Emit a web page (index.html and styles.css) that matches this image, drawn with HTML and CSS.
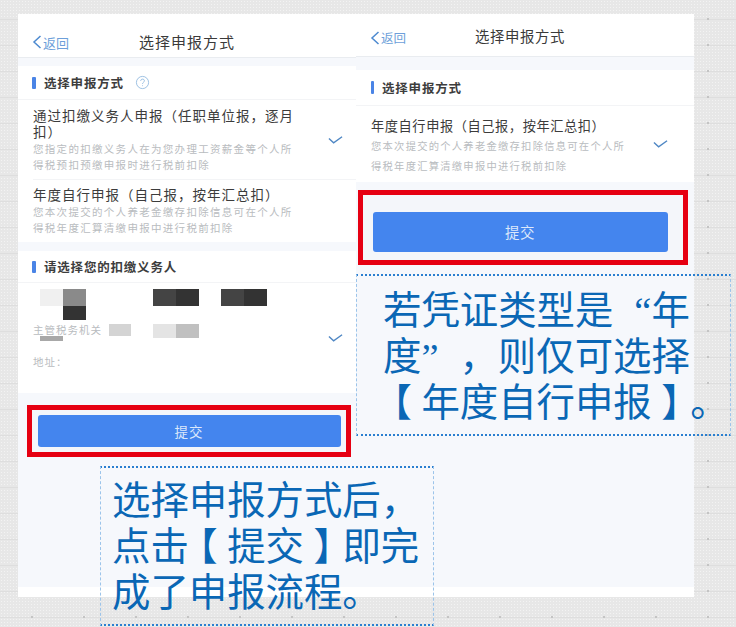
FILE: index.html
```html
<!DOCTYPE html>
<html lang="zh">
<head>
<meta charset="utf-8">
<title>选择申报方式</title>
<link rel="stylesheet" href="styles.css">
</head>
<body>
<div class="stage">
  <main class="sheet">
    <section class="phone phone-left">
      <header class="bar"><span class="back"><svg class="chev" viewBox="0 0 10 14"><path d="M8.500 1 2 7l6.500 6"/></svg>返回</span><h1>选择申报方式</h1></header>
      <div class="card card-a">
        <h2 class="sec"><i></i>选择申报方式<svg class="help" viewBox="0 0 16 16"><circle cx="8" cy="8" r="6.500"/><path d="M6 6.300c.2-2.700 4.200-2.500 4 0 0 1.500-2 1.500-2 3.200"/><path d="M8 11v.9"/></svg></h2>
        <div class="row">
          <div class="opt"><p class="t">通过扣缴义务人申报（任职单位报，逐月扣）</p><p class="d">您指定的扣缴义务人在为您办理工资薪金等个人所得税预扣预缴申报时进行税前扣除</p></div>
          <svg class="check" viewBox="0 0 16 10"><path d="M1 3.500 6 8 15 1.500"/></svg>
        </div>
        <div class="row row-plain">
          <div class="opt"><p class="t">年度自行申报（自己报，按年汇总扣）</p><p class="d">您本次提交的个人养老金缴存扣除信息可在个人所得税年度汇算清缴申报中进行税前扣除</p></div>
        </div>
      </div>
      <div class="card card-b">
        <h2 class="sec"><i></i>请选择您的扣缴义务人</h2>
        <div class="agent">
          <span class="b b1"></span><span class="b b2"></span><span class="b b3"></span><span class="b b4"></span><span class="b b5"></span><span class="b b6"></span><span class="b b7"></span><span class="b b8"></span>
          <p class="lab lab1">主管税务机关</p>
          <p class="lab lab2">地址：</p>
          <svg class="check check-b" viewBox="0 0 16 10"><path d="M1 3.500 6 8 15 1.500"/></svg>
        </div>
      </div>
      <div class="foot"><div class="red"><button class="btn">提交</button></div></div>
    </section>
    <section class="phone phone-right">
      <header class="bar"><span class="back"><svg class="chev" viewBox="0 0 10 14"><path d="M8.500 1 2 7l6.500 6"/></svg>返回</span><h1>选择申报方式</h1></header>
      <div class="card card-c">
        <h2 class="sec"><i></i>选择申报方式</h2>
        <div class="row">
          <div class="opt"><p class="t">年度自行申报（自己报，按年汇总扣）</p><p class="d">您本次提交的个人养老金缴存扣除信息可在个人所得税年度汇算清缴申报中进行税前扣除</p></div>
          <svg class="check" viewBox="0 0 16 10"><path d="M1 3.500 6 8 15 1.500"/></svg>
        </div>
      </div>
      <div class="foot"><div class="red"><button class="btn">提交</button></div></div>
    </section>
  </main>
  <aside class="note note-right"><p>若凭证类型是<span class="lq">“</span>年</p><p>度<span class="rq">”</span>，则仅可选择</p><p><span class="br">【</span>年度自行申报<span class="br">】</span>。</p></aside>
  <aside class="note note-left"><p>选择申报方式后，</p><p>点击<span class="br">【</span>提交<span class="br">】</span>即完</p><p>成了申报流程。</p></aside>
</div>
</body>
</html>
```
FILE: styles.css
```css
* { box-sizing: border-box; margin: 0; padding: 0; }
html, body { width: 736px; height: 627px; overflow: hidden; }
body {
  font-family: "Noto Sans CJK SC", "Noto Sans", sans-serif;
  background-color: #e7e7e7;
  background-image:
    radial-gradient(circle, #c4c4c4 0 1px, transparent 1.300px),
    repeating-linear-gradient(180deg, transparent 0 25px, #dedede 25px 26px),
    radial-gradient(circle, #f3f3f3 0 .7px, transparent 1px);
  background-size: 52px 26px, 100% 26px, 3px 3px;
  background-position: 6px 6px, 0 -6px, 0 0;
}
.stage { position: relative; width: 736px; height: 627px; padding: 14px 42px 30px 18px; }
.sheet { display: flex; height: 583px; background: #f6f8fc; border-bottom: 10px solid #fff; }
.phone { width: 338px; display: flex; flex-direction: column; }
.bar {
  background: #fff; position: relative;
  display: flex; align-items: center; justify-content: center;
  border-bottom: 1px solid #e9ecf0;
}
.bar h1 { font-weight: 400; color: #3a3a3a; line-height: 1; }
.back {
  position: absolute; display: flex; align-items: center; gap: 1px;
  color: #6d9fda; line-height: 1; transform: translateY(-50%);
}
.chev { width: 10px; height: 14px; fill: none; stroke: #4d8ad0; stroke-width: 1.500; }
.phone-left .bar { height: 44px; padding-top: 12px; }
.phone-left .bar h1 { font-size: 15px; letter-spacing: 1px; }
.phone-left .back { left: 14px; top: 28px; font-size: 13px; }
.phone-right .bar { height: 43px; padding: 2px 10px 0 0; }
.phone-right .bar h1 { font-size: 14.400px; letter-spacing: .6px; }
.phone-right .back { left: 14px; top: 24px; font-size: 12.500px; }
.card { background: #fff; }
.card-a { margin-top: 8px; }
.sec {
  display: flex; align-items: center; font-size: 12.500px; font-weight: 700; color: #3d3d3d;
  padding-left: 14px; height: 34px; letter-spacing: .8px; border-bottom: 1px solid #f3f4f6;
}
.sec i { width: 4px; height: 12px; margin-right: 8px; border-radius: 1px; background: #4a84e6; }
.help { width: 15px; height: 15px; margin-left: 11px; fill: none; stroke: #8db7de; stroke-width: .9; }
.row { display: flex; align-items: center; margin-left: 15px; padding-right: 13px; border-bottom: 1px solid #f3f4f6; }
.row-plain { border-bottom: 0; }
.opt { width: 265px; padding: 9px 0 6px; flex: none; font-family: "Liberation Sans", "Noto Sans CJK SC", sans-serif; }
.row-plain .opt { padding-top: 8px; }
.t { font-size: 13.500px; line-height: 16px; color: #3c3c3c; letter-spacing: 1px; }
.d { font-size: 10.500px; line-height: 16px; color: #b9bcc0; letter-spacing: 1.300px; }
.check { width: 15px; height: 10px; margin-left: auto; fill: none; stroke: #4f87c4; stroke-width: 1.500; }
.card-b { margin-top: 9px; }
.card-b .sec { height: 32px; }
.agent { position: relative; height: 110px; }
.b { position: absolute; }
.b1 { left: 22px; top: 6px; width: 23px; height: 17px; background: #f0f0f0; }
.b2 { left: 45px; top: 6px; width: 23px; height: 17px; background: #8a8a8a; }
.b3 { left: 45px; top: 23px; width: 23px; height: 14px; background: #333; }
.b4 { left: 135px; top: 6px; width: 46px; height: 17px; background: linear-gradient(90deg, #444 50%, #333 50%); }
.b5 { left: 203px; top: 6px; width: 46px; height: 17px; background: linear-gradient(90deg, #444 50%, #333 50%); }
.b6 { left: 91px; top: 41px; width: 22px; height: 12px; background: #d4d4d4; }
.b7 { left: 135px; top: 41px; width: 46px; height: 14px; background: linear-gradient(90deg, #e4e4e4 50%, #c0c0c0 50%); }
.b8 { left: 22px; top: 53px; width: 23px; height: 5px; background: #a8a8a8; }
.lab { position: absolute; left: 15px; font-size: 10.500px; line-height: 12px; color: #b9bcc0; letter-spacing: 1px; }
.lab1 { top: 41px; }
.lab2 { top: 73px; }
.check-b { position: absolute; right: 13px; top: 50px; }
.foot { display: flex; }
.phone-left .foot { padding: 12px 0 0 9px; }
.phone-right .foot { padding: 8px 0 0 2px; }
.red { border: 5px solid #e60012; background: #f4f6fa; display: flex; align-items: center; justify-content: center; }
.phone-left .red { width: 324px; height: 52px; }
.phone-right .red { width: 330px; height: 75px; padding: 8px 6px 0 0; }
.btn { border: 0; border-radius: 3px; background: #4485ee; color: #dce8fb; font: inherit; }
.phone-left .btn { width: 303px; height: 32px; font-size: 13.500px; letter-spacing: 1px; }
.phone-right .btn { width: 295px; height: 40px; font-size: 14.500px; letter-spacing: .5px; }
.phone-right .sec { height: 36px; padding-left: 15px; }
.phone-right .sec i { width: 3px; height: 13px; margin-right: 8px; }
.card-c { margin-top: 13px; }
.phone-right .row { padding-right: 26px; border-bottom: 0; }
.phone-right .opt { padding: 13px 0 6px; }
.phone-right .t { font-size: 13.200px; letter-spacing: .6px; }
.phone-right .d { font-size: 10.300px; line-height: 19.500px; letter-spacing: 1.250px; margin-top: 2px; }
.note {
  position: absolute; color: #0a67b5; font-size: 38.400px;
  font-family: "Liberation Serif", "Noto Sans CJK SC", serif;
  border: 1px dashed #9cc4ea; border-top: 2px dotted #2a7fd0; border-bottom: 2px dotted #2a7fd0;
}
.note p { white-space: nowrap; }
.br { font-feature-settings: "halt"; margin: 0 9.600px; }
.lq { margin-left: 21px; }
.rq { margin-right: 21px; }
.note-right { left: 356px; top: 274px; width: 375px; height: 162px; padding: 12px 0 0 26px; line-height: 46px; }
.note-left { left: 100px; top: 466px; width: 334px; height: 160px; padding: 10px 0 0 11px; line-height: 46px; }
```
